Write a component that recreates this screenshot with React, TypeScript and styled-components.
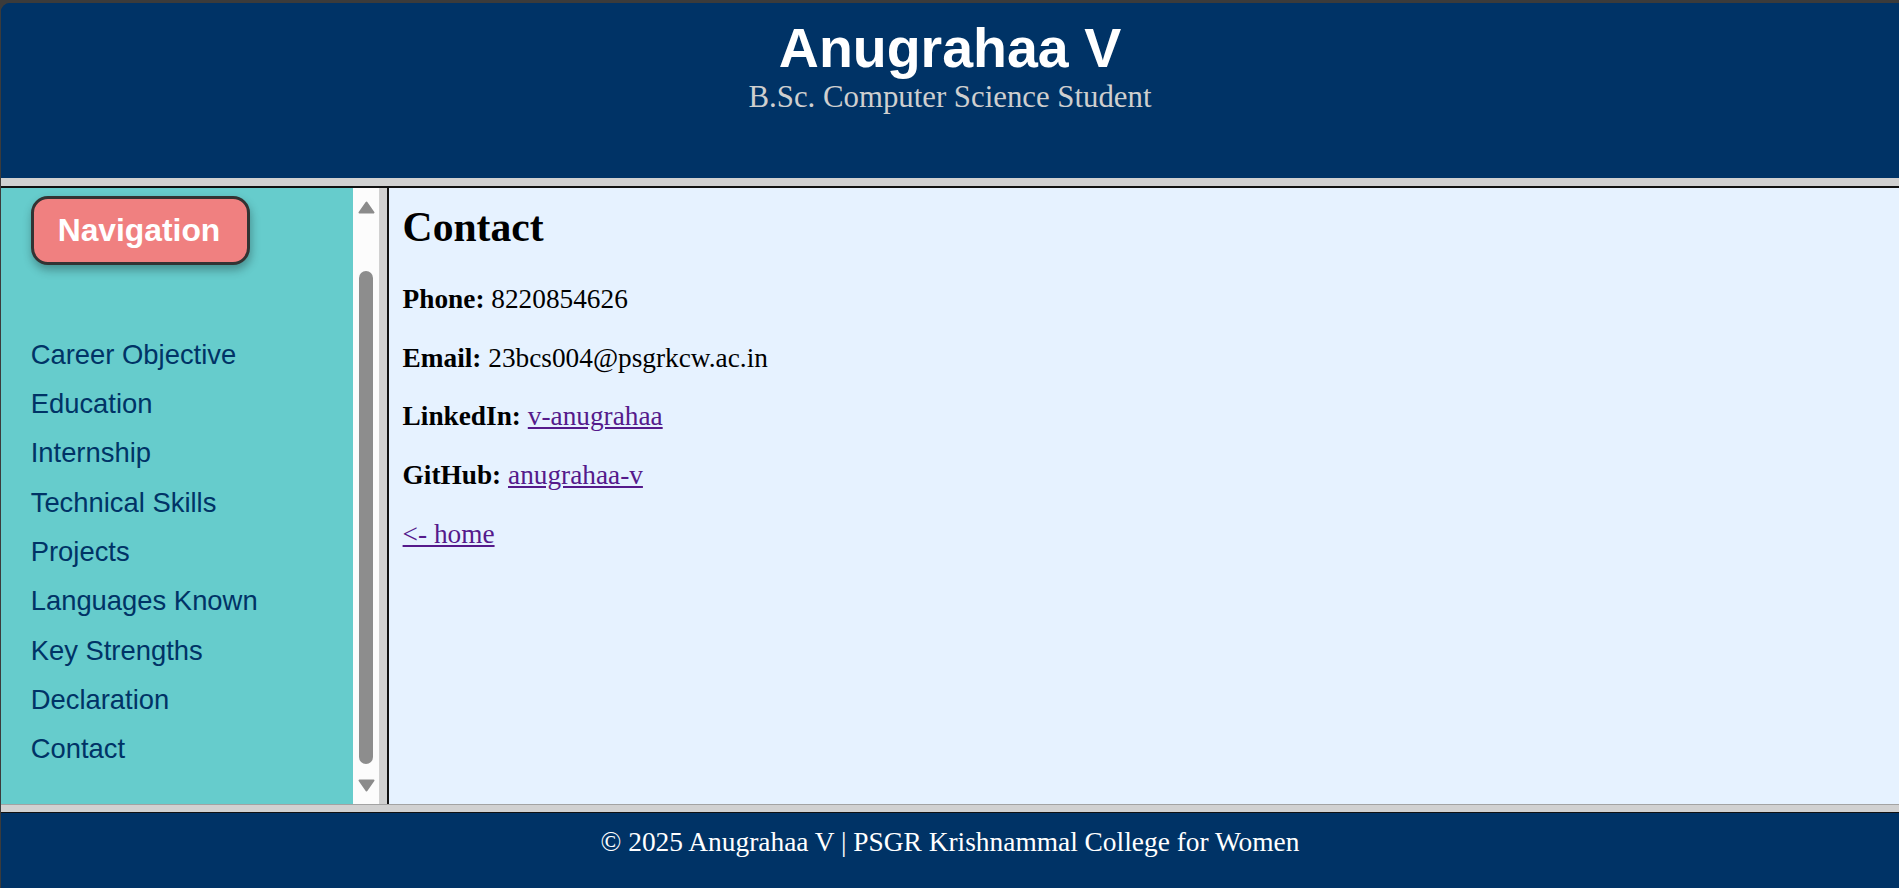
import React from "react";
import styled, { createGlobalStyle } from "styled-components";

const GlobalStyle = createGlobalStyle`
  html, body {
    margin: 0;
    padding: 0;
    background: #3b3b3b;
    height: 888px;
    overflow: hidden;
  }
`;

const Window = styled.div`
  margin: 3px 0 0 1px;
  height: 885px;
  display: flex;
  flex-direction: column;
  border-top-left-radius: 9px;
  overflow: hidden;
  background: #003366;
`;

const Header = styled.header`
  height: 175px;
  flex: none;
  box-sizing: border-box;
  padding-top: 13px;
  background: #003366;
  text-align: center;
`;

const Title = styled.h1`
  margin: 0;
  font-family: "Liberation Sans", Arial, sans-serif;
  font-weight: bold;
  font-size: 55.5px;
  color: #ffffff;
`;

const Subtitle = styled.p`
  margin: 0;
  font-family: "Liberation Serif", "Times New Roman", serif;
  font-size: 30.8px;
  color: #cfcfcf;
`;

const TopRule = styled.div`
  flex: none;
  height: 8px;
  background: #d1d1d1;
  border-bottom: 2px solid #111;
`;

const BottomRule = styled.div`
  flex: none;
  height: 7px;
  background: #d1d1d1;
  border-top: 1px solid #a3a3a3;
  border-bottom: 1px solid #111;
`;

const Middle = styled.div`
  flex: none;
  height: 616px;
  display: flex;
`;

const Sidebar = styled.nav`
  width: 352px;
  flex: none;
  box-sizing: border-box;
  background: #66cccc;
  padding: 7.7px 0 0 29.7px;
`;

const NavButton = styled.div`
  display: inline-block;
  border: 3.4px solid #333333;
  border-radius: 17px;
  background: #f08080;
  color: #ffffff;
  font-family: "Liberation Sans", Arial, sans-serif;
  font-weight: bold;
  font-size: 31.8px;
  padding: 13.4px 26.4px 13.4px 24px;
  box-shadow: 1px 5px 10px rgba(0, 0, 0, 0.3);
`;

const LinkList = styled.ul`
  list-style: none;
  margin: 73.4px 0 0;
  padding: 0;
`;

const LinkItem = styled.li`
  margin-bottom: 17.3px;
`;

const NavLink = styled.a`
  font-family: "Liberation Sans", Arial, sans-serif;
  font-size: 27.4px;
  color: #003366;
  text-decoration: none;
`;

const ScrollTrack = styled.div`
  width: 26px;
  flex: none;
  background: #fcfcfc;
  display: flex;
  flex-direction: column;
  align-items: center;
  padding-top: 13px;
  box-sizing: border-box;
`;

const Thumb = styled.div`
  width: 14px;
  height: 493px;
  margin: 57px 0 15px;
  border-radius: 7px;
  background: #8d8d8d;
`;

const VRule = styled.div`
  width: 8px;
  flex: none;
  background: #d1d1d1;
  border-right: 2px solid #111;
`;

const Content = styled.main`
  flex: 1;
  background: #e6f2ff;
  padding: 15px 13.6px;
  font-family: "Liberation Serif", "Times New Roman", serif;
  font-size: 27.3px;
  color: #000;
`;

const Heading = styled.h2`
  margin: 0 0 33px;
  font-size: 41.6px;
  font-weight: bold;
`;

const Para = styled.p`
  margin: 27.7px 0;
`;

const Label = styled.b`
  font-weight: bold;
`;

const Link = styled.a`
  color: #551a8b;
  text-decoration: underline;
`;

const Footer = styled.footer`
  flex: 1;
  background: #003366;
  color: #ffffff;
  text-align: center;
  padding-top: 14px;
  font-family: "Liberation Serif", "Times New Roman", serif;
  font-size: 27.4px;
`;

const Arrow = ({ down }: { down?: boolean }) => (
  <svg width="17" height="13" viewBox="0 0 17 13">
    <polygon
      points={down ? "1.5,1.5 15.5,1.5 8.5,11.5" : "8.5,1.5 15.5,11.5 1.5,11.5"}
      fill="#8b8b8b"
      stroke="#8b8b8b"
      strokeWidth="2"
      strokeLinejoin="round"
    />
  </svg>
);

const links = [
  "Career Objective",
  "Education",
  "Internship",
  "Technical Skills",
  "Projects",
  "Languages Known",
  "Key Strengths",
  "Declaration",
  "Contact",
];

export default function App() {
  return (
    <>
      <GlobalStyle />
      <Window>
        <Header>
          <Title>Anugrahaa V</Title>
          <Subtitle>B.Sc. Computer Science Student</Subtitle>
        </Header>
        <TopRule />
        <Middle>
          <Sidebar>
            <NavButton>Navigation</NavButton>
            <LinkList>
              {links.map((l) => (
                <LinkItem key={l}>
                  <NavLink href="#">{l}</NavLink>
                </LinkItem>
              ))}
            </LinkList>
          </Sidebar>
          <ScrollTrack>
            <Arrow />
            <Thumb />
            <Arrow down />
          </ScrollTrack>
          <VRule />
          <Content>
            <Heading>Contact</Heading>
            <Para>
              <Label>Phone:</Label> 8220854626
            </Para>
            <Para>
              <Label>Email:</Label> 23bcs004@psgrkcw.ac.in
            </Para>
            <Para>
              <Label>LinkedIn:</Label> <Link href="#">v-anugrahaa</Link>
            </Para>
            <Para>
              <Label>GitHub:</Label> <Link href="#">anugrahaa-v</Link>
            </Para>
            <Para>
              <Link href="#">&lt;- home</Link>
            </Para>
          </Content>
        </Middle>
        <BottomRule />
        <Footer>© 2025 Anugrahaa V | PSGR Krishnammal College for Women</Footer>
      </Window>
    </>
  );
}
